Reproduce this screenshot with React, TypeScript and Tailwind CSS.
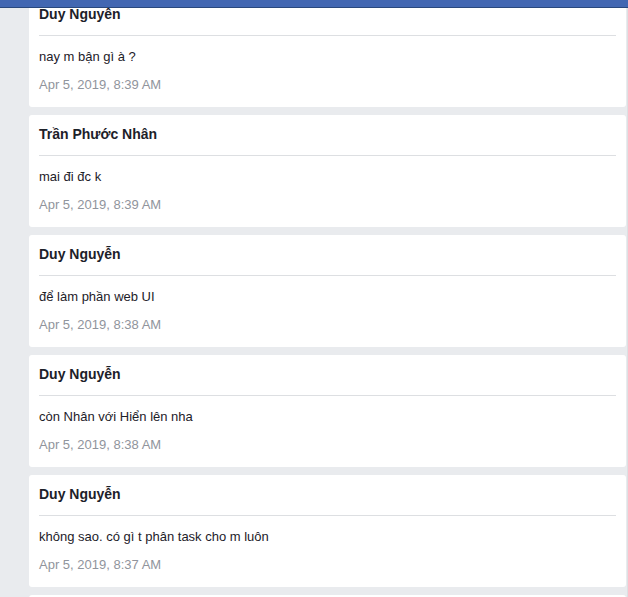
import React from "react";

const items = [
  { name: "Duy Nguyễn", msg: "nay m bận gì à ?", date: "Apr 5, 2019, 8:39 AM" },
  { name: "Trần Phước Nhân", msg: "mai đi đc k", date: "Apr 5, 2019, 8:39 AM" },
  { name: "Duy Nguyễn", msg: "để làm phần web UI", date: "Apr 5, 2019, 8:38 AM" },
  { name: "Duy Nguyễn", msg: "còn Nhân với Hiển lên nha", date: "Apr 5, 2019, 8:38 AM" },
  { name: "Duy Nguyễn", msg: "không sao. có gì t phân task cho m luôn", date: "Apr 5, 2019, 8:37 AM" },
];

export default function App() {
  return (
    <div
      className="relative h-[597px] w-[628px] overflow-hidden bg-[#e9ebee]"
      style={{ fontFamily: '"Liberation Sans", Arial, sans-serif' }}
    >
      <div className="absolute left-0 top-0 z-10 h-[8px] w-full border-b border-[#29487d] bg-[#4267b2]" />
      <div className="flex h-full">
        <div className="mt-[-5px] ml-[29px] flex w-[597px] flex-col gap-[8px]">
          {items.map((it, i) => (
            <div key={i} className="flex h-[112px] shrink-0 flex-col rounded-[3px] bg-white px-[10px] pt-[10px]">
              <div className="h-[19px] text-[14px] font-bold leading-[19px] text-[#1d2129]">{it.name}</div>
              <div className="mt-[11px] h-px bg-[#dddfe2]" />
              <div className="mt-[12px] h-[18px] text-[13px] leading-[18px] text-[#1d2129]">{it.msg}</div>
              <div className="mt-[10px] h-[18px] text-[13px] leading-[18px] text-[#90949c]">{it.date}</div>
            </div>
          ))}
          <div className="h-[112px] shrink-0 rounded-[3px] bg-white" />
        </div>
        <div className="ml-[1px] w-px bg-[#dddfe2]" />
      </div>
    </div>
  );
}
